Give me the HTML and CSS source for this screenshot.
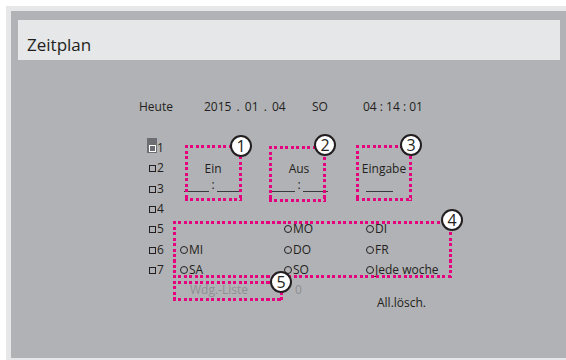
FILE: index.html
```html
<!DOCTYPE html>
<html lang="de">
<head>
    <meta charset="UTF-8">
    <meta name="viewport" content="width=device-width, initial-scale=1.0">
    <title>Zeitplan</title>
    <link rel="stylesheet" href="styles.css">
</head>
<body>
    <div class="frame">
        <div class="panel">
            <div class="title">Zeitplan</div>

            <div class="menu">
                <div class="today">
                    <span>Heute</span>
                    <span class="date">2015 . 01 . 04</span>
                    <span>SO</span>
                    <span>04 : 14 : 01</span>
                </div>

                <div class="grid">
                    <div class="list">
                        <div class="item on"><span class="chk"></span>1</div>
                        <div class="item"><span class="chk"></span>2</div>
                        <div class="item"><span class="chk"></span>3</div>
                        <div class="item"><span class="chk"></span>4</div>
                        <div class="item"><span class="chk"></span>5</div>
                        <div class="item"><span class="chk"></span>6</div>
                        <div class="item"><span class="chk"></span>7</div>
                    </div>

                    <div class="fields">
                        <div class="field f-on">
                            <span>Ein</span>
                            <div class="line"><span class="blank"></span><span class="colon">:</span><span class="blank"></span></div>
                        </div>
                        <div class="field f-off">
                            <span>Aus</span>
                            <div class="line"><span class="blank"></span><span class="colon">:</span><span class="blank"></span></div>
                        </div>
                        <div class="field f-src">
                            <span>Eingabe</span>
                            <div class="line"><span class="blank"></span></div>
                        </div>
                    </div>

                    <div class="days">
                        <span></span>
                        <span class="day">MO</span>
                        <span class="day">DI</span>
                        <span class="day">MI</span>
                        <span class="day">DO</span>
                        <span class="day">FR</span>
                        <span class="day">SA</span>
                        <span class="day">SO</span>
                        <span class="day">Jede woche</span>
                    </div>

                    <div class="foot">
                        <span class="wdg">Wdg.-Liste</span>
                        <span class="zero">0</span>
                        <span class="clear">All.lösch.</span>
                    </div>
                </div>
            </div>

            <!-- callouts -->
            <div class="note box1"></div>
            <div class="note box2"></div>
            <div class="note box3"></div>
            <div class="note box4"></div>
            <div class="note box5"></div>
            <span class="num num1">1</span>
            <span class="num num2">2</span>
            <span class="num num3">3</span>
            <span class="num num4">4</span>
            <span class="num num5">5</span>
        </div>
    </div>
</body>
</html>
```

FILE: styles.css
```css
body {
    margin: 0;
    background-color: #fff;
    font-family: "Open Sans", "Noto Sans", sans-serif;
    color: #231f20;
}
.frame {
    margin: 6px 0 0 6px;
    padding: 5px 0 2px 5px;
    background-color: #e6e7e8;
}
.panel {
    position: relative;
    height: 347px;
    box-sizing: border-box;
    padding: 9px 6px 0 7px;
    background-color: #b1b2b5;
}
.title {
    height: 40px;
    box-sizing: border-box;
    padding: 10px 0 0 9px;
    line-height: 30px;
    font-size: 17px;
    background-color: #e6e7e8;
}
.menu {
    margin: 40px 0 0 121px;
    font-size: 12px;
}
.today {
    display: grid;
    grid-template-columns: 65px 108px 51px auto;
    line-height: 14px;
}
.date {
    word-spacing: 2px;
}
.grid {
    margin: 24px 0 0 8px;
    display: grid;
    grid-template-columns: 33px 104px 82px 1fr;
    grid-template-rows: repeat(7, 20.33px) 30px;
}
.list {
    grid-column: 1;
    grid-row: 1 / 8;
    display: grid;
    grid-auto-rows: 20.33px;
}
.item {
    display: flex;
    align-items: center;
    line-height: 14px;
}
.chk {
    width: 10px;
    height: 15px;
    align-self: flex-start;
    display: flex;
    align-items: flex-end;
    justify-content: center;
    box-sizing: border-box;
    padding-bottom: 1px;
}
.chk::before {
    content: "";
    width: 7px;
    height: 7px;
    box-sizing: border-box;
    border: 1px solid #231f20;
}
.item.on .chk {
    background-color: #6d6e71;
}
.item.on .chk::before {
    border-color: #fff;
}

/* time fields */
.fields {
    grid-column: 2 / 5;
    grid-row: 1 / 4;
    display: flex;
    align-items: flex-start;
}
.field {
    display: flex;
    flex-direction: column;
    padding-top: 24px;
    text-align: center;
    line-height: 14px;
}
.f-on {
    margin-left: 4px;
    width: 58px;
}
.f-off {
    margin-left: 28px;
    width: 58px;
}
.f-src {
    margin-left: 28px;
    width: 56px;
}
.line {
    display: flex;
    align-items: flex-end;
    height: 16px;
}
.blank {
    flex: 1;
    height: 100%;
    box-sizing: border-box;
    border-bottom: 1px solid #3a3a3a;
}
.colon {
    margin: 0 2px;
}
.f-src .blank {
    flex: none;
    width: 27px;
    margin-left: 10px;
}

/* weekdays */
.days, .foot {
    grid-column: 2 / 5;
    display: grid;
    grid-template-columns: 104px 82px 1fr;
}
.days {
    grid-row: 5 / 8;
    grid-auto-rows: 20.33px;
    align-items: center;
    line-height: 14px;
}
.day {
    display: flex;
    align-items: center;
}
.day::before {
    content: "";
    width: 8px;
    height: 8px;
    box-sizing: border-box;
    margin-right: 1px;
    border: 1px solid #231f20;
    border-radius: 50%;
}
.foot {
    grid-row: 8;
}
.wdg, .zero {
    color: #8e8f92;
    line-height: 20px;
}
.wdg {
    padding-left: 10px;
}
.zero {
    padding-left: 11px;
}
.clear {
    padding-left: 11px;
    align-self: end;
    line-height: 14px;
}

/* callouts */
.note {
    position: absolute;
    background:
        repeating-linear-gradient(90deg, #e6007e 0 3px, transparent 3px 5.5px) left top / 100% 3px no-repeat,
        repeating-linear-gradient(90deg, #e6007e 0 3px, transparent 3px 5.5px) left bottom / 100% 3px no-repeat,
        repeating-linear-gradient(180deg, #e6007e 0 3px, transparent 3px 5.5px) left top / 3px 100% no-repeat,
        repeating-linear-gradient(180deg, #e6007e 0 3px, transparent 3px 5.5px) right top / 3px 100% no-repeat;
}
.box1 { left: 174px; top: 134px; width: 57px; height: 56px; }
.box2 { left: 258px; top: 135px; width: 57px; height: 56px; }
.box3 { left: 345px; top: 134px; width: 56px; height: 56px; }
.box4 { left: 162px; top: 210px; width: 279px; height: 57px; }
.box5 { left: 162px; top: 270px; width: 110px; height: 20px; }
.num {
    position: absolute;
    width: 22px;
    height: 22px;
    box-sizing: border-box;
    border: 2px solid #231f20;
    border-radius: 50%;
    background-color: #fff;
    font-size: 16px;
    line-height: 18px;
    text-align: center;
}
.num1 { left: 219px; top: 124px; }
.num2 { left: 303px; top: 123px; }
.num3 { left: 389px; top: 123px; }
.num4 { left: 430px; top: 198px; }
.num5 { left: 259px; top: 260px; }
```
